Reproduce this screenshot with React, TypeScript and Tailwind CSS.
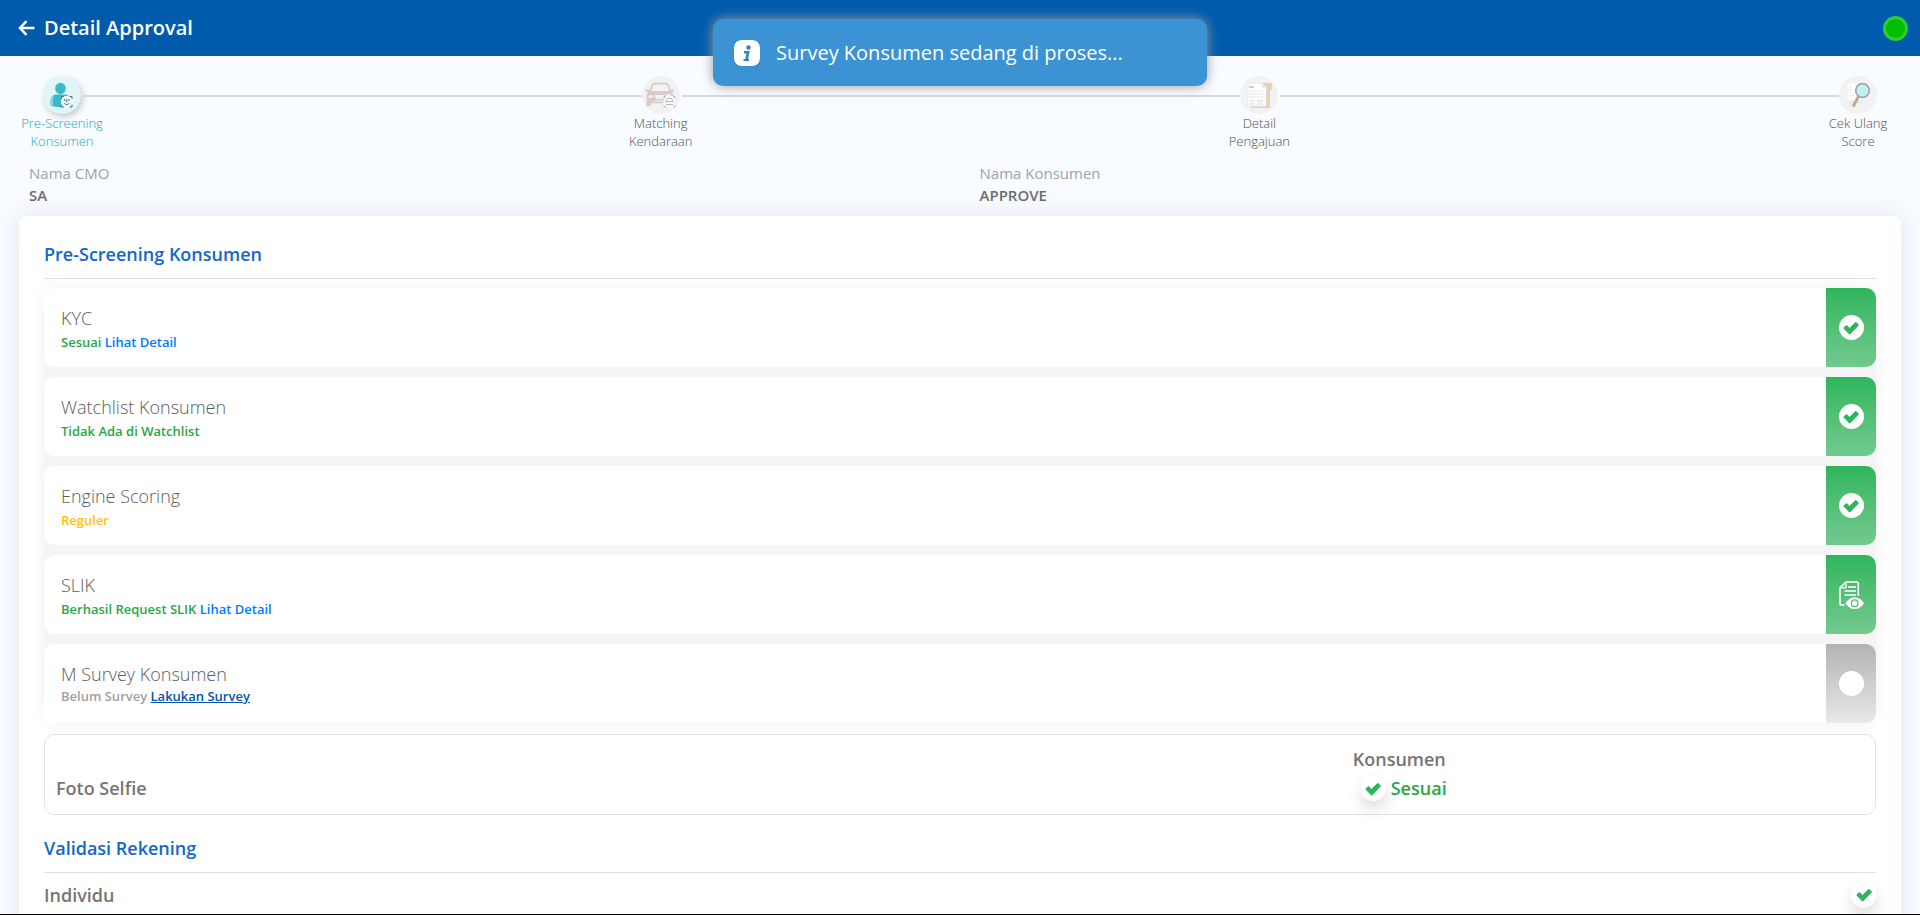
import React from "react";

function UserIcon() {
  return (
    <svg viewBox="0 0 38 38" className="size-full" aria-hidden="true">
      <ellipse cx="17.5" cy="12.5" rx="5.3" ry="5.7" fill="#3db8cb" />
      <path d="M7.5 29v-4c0-4.500 3-6.500 6.500-6.500h7c4 0 6.500 2 6.500 6.500v4c-5 3-15 3-20 0z" fill="#3db8cb" />
      <path d="M7.500 29v-4c0-3 1-4.800 3-5.800l-.8 11.200z" fill="#8fd5e0" />
      <rect x="18" y="20" width="11.500" height="11.500" rx="2.500" fill="#eef7fb" />
      <g fill="none" stroke="#4c6580" strokeWidth="1" strokeLinecap="round">
        <path d="M18.500 22.500v-2h2M27 20.500h2v2M29 29v2h-2M20.500 31h-2v-2" />
        <path d="M21.500 23.500v1M26 23.500v1M23.800 23.500v2.500M21.300 27.300c1.200 1.800 3.800 1.800 5 0" />
      </g>
    </svg>
  );
}

function CarIcon() {
  return (
    <svg viewBox="0 0 38 38" className="size-full" aria-hidden="true">
      <g fill="none" stroke="#d9cbcb" strokeWidth="1.800" strokeLinejoin="round">
        <path d="M8 15.500 10.500 9c.4-1 1-1.500 2-1.500h11.500c1 0 1.600.5 2 1.500l2.500 6.500" />
      </g>
      <path d="M3 13.500h4l1.500 1.500h20l1.500-1.500h2l-.5 2-1.500.5c1 1.300 1.500 2.500 1.500 4V30h-4v-2.800H9V30H4.500V20c0-1.500.5-2.700 1.500-4l-2.500-.8z" fill="#d9cbcb" />
      <ellipse cx="8.800" cy="20.500" rx="2.400" ry="1.600" fill="#f2f0f0" />
      <ellipse cx="26.500" cy="19.500" rx="2.400" ry="1.400" fill="#f2f0f0" />
      <path d="M13 19.500h9l-1.500 3h-6zM12 25h9" fill="#f2f0f0" stroke="#f2f0f0" strokeWidth="1" />
      <rect x="21.500" y="20" width="12" height="11.500" rx="2" fill="#fafafa" />
      <g fill="none" stroke="#b9b9b9" strokeWidth="1">
        <path d="M22 22.500V20.500h2M31 20.500h2v2M33 29v2h-2M24 31h-2v-2" />
        <path d="M24.500 24.500 25.500 22.500h4l1 2M23 25.500h9M24 28.500h7" />
      </g>
    </svg>
  );
}

function FolderIcon() {
  return (
    <svg viewBox="0 0 38 38" className="size-full" aria-hidden="true">
      <path d="M19 7h13v6.500h-2V32H11v-3h11z" fill="#e9cfb4" />
      <path d="M8 7.500h14.500l3.500 4V30H8z" fill="#fdfdfd" stroke="#e3eeee" strokeWidth=".7" />
      <path d="M22 7.500v4h4z" fill="#d7eeee" />
      <path d="M9 11h5" stroke="#b9bfca" strokeWidth="1.500" />
      <path d="M9 15h14M9 18h15M9 21h14" stroke="#e7e9ec" strokeWidth="1" />
      <path d="M10 25h5M17 25h6M10 28h5M17 28h6" stroke="#e2e5e8" strokeWidth="1.500" />
    </svg>
  );
}

function MagnifierIcon() {
  return (
    <svg viewBox="0 0 38 38" className="size-full" aria-hidden="true">
      <path d="M8 7h14v19H8z" fill="#fcfefe" stroke="#e2f2f2" strokeWidth=".8" />
      <path d="M8 25.500h16" stroke="#dceeee" strokeWidth="2" />
      <path d="M10.500 11h2M10.500 14h2M10.500 17h2M10.500 20h2" stroke="#dadfe2" strokeWidth="1" />
      <path d="m19.500 20.500-5.500 10" stroke="#c9a48a" strokeWidth="3" strokeLinecap="butt" />
      <circle cx="23.500" cy="14.500" r="6.800" fill="#c3f0f3" stroke="#a0a9ac" strokeWidth="1.700" />
    </svg>
  );
}

function CheckMark({ className }: { className: string }) {
  return (
    <svg viewBox="0 0 16 14" className={className} aria-hidden="true">
      <path
        d="M1.400 6.300 0.800 7.200 6.600 13.200 15.600 4.100 12.800 1.200 6.600 7.400 4.200 4.900Q3.500 4.300 2.700 5z"
        fill="#2eb55c"
        stroke="#2eb55c"
        strokeWidth="1"
        strokeLinejoin="round"
      />
    </svg>
  );
}

function CheckDisc() {
  return (
    <span className="flex size-[25px] items-center justify-center rounded-full bg-white shadow-[0_8px_16px_rgba(0,0,0,0.15)]">
      <CheckMark className="w-4" />
    </span>
  );
}

function DocumentEyeIcon() {
  return (
    <svg viewBox="0 0 25 28" className="h-7 w-[25px]" fill="none" stroke="#fff" aria-hidden="true">
      <path d="M5.500 24H2.800Q1 24 1 22.200V6.800L7 1h10.500Q19.300 1 19.300 2.800V15" strokeWidth="1.600" />
      <path d="M7 1v5.800H1" strokeWidth="1.300" />
      <path d="M9 6h8M5.500 10H17M5.500 14H17" strokeWidth="1.300" />
      <path d="M6.500 22.300C9.500 18 12 16.500 15.700 16.500S22 18 25 22.300C22 26.500 19.400 28 15.700 28S9.500 26.500 6.500 22.300z" fill="#fff" stroke="none" />
      <circle cx="15.700" cy="22.200" r="3.300" stroke="#4cbd73" strokeWidth="1.200" />
    </svg>
  );
}

type Step = { lines: [string, string]; icon: React.ReactNode; active?: boolean };

const steps: Step[] = [
  { lines: ["Pre-Screening", "Konsumen"], icon: <UserIcon />, active: true },
  { lines: ["Matching", "Kendaraan"], icon: <CarIcon /> },
  { lines: ["Detail", "Pengajuan"], icon: <FolderIcon /> },
  { lines: ["Cek Ulang", "Score"], icon: <MagnifierIcon /> },
];

function Stepper() {
  return (
    <div className="flex items-start px-[22px] pt-5">
      {steps.map((step, i) => (
        <React.Fragment key={step.lines[0]}>
          {i > 0 && <div className="mt-[19px] -mr-[21px] -ml-[19px] h-0.5 flex-1 bg-[#d6d8db]" />}
          <div className="flex w-20 flex-col items-center">
            <div
              className={
                step.active
                  ? "size-[38px] rounded-full bg-[#e0f5f6] shadow-[2px_3px_6px_rgba(0,0,0,0.2)]"
                  : "size-[38px] rounded-full bg-[#f2f2f2]"
              }
            >
              {step.icon}
            </div>
            <p
              className={
                step.active
                  ? "text-center text-[13px] leading-[18px] font-[350] whitespace-nowrap text-[#22a9be]"
                  : "text-center text-[13px] leading-[18px] font-[350] whitespace-nowrap text-[#505050]"
              }
            >
              {step.lines[0]}
              <br />
              {step.lines[1]}
            </p>
          </div>
        </React.Fragment>
      ))}
    </div>
  );
}

type Kind = "ok" | "document" | "pending";

function ResultRow({ title, kind, children }: { title: string; kind: Kind; children: React.ReactNode }) {
  return (
    <li className="flex min-h-[79px] overflow-hidden rounded-[10px] bg-white">
      <div className="flex-1 pt-[18px] pl-[17px]">
        <h3 className="text-lg leading-6 font-[350] text-[#5c5c5c]">{title}</h3>
        <p
          className={
            kind === "pending" ? "text-[13px] leading-5 font-semibold" : "text-[13px] leading-6 font-semibold"
          }
        >
          {children}
        </p>
      </div>
      <div
        className={
          kind === "pending"
            ? "flex w-[50px] items-center justify-center bg-linear-to-b from-[#b3b3b3] to-[#e9e9e9]"
            : "flex w-[50px] items-center justify-center bg-linear-to-b from-[#2db55b] to-[#72c98f]"
        }
      >
        {kind === "document" ? (
          <DocumentEyeIcon />
        ) : (
          <span className="flex size-[25px] items-center justify-center rounded-full bg-white">
            {kind === "ok" && <CheckMark className="w-4" />}
          </span>
        )}
      </div>
    </li>
  );
}

function SectionTitle({ children }: { children: React.ReactNode }) {
  return (
    <h2 className="border-b border-[#dfe0e2] pb-3 text-lg leading-6 font-[550] text-[#1467c8]">{children}</h2>
  );
}

export default function App() {
  return (
    <div className="h-screen overflow-hidden border-b border-black bg-[#f8fbff] font-['Open_Sans','Noto_Sans',sans-serif]">
      <header className="flex h-14 items-center bg-[#005bac] pr-3 pl-[18px] text-white">
        <button type="button" aria-label="Kembali" className="mr-[9px] flex w-[17px] items-center">
          <svg viewBox="0 0 17 16" className="h-4 w-[17px]" fill="none" stroke="#fff" strokeWidth="2.500" aria-hidden="true">
            <path d="M16.500 8H2.500M8.500 1.200 2 8l6.500 6.800" />
          </svg>
        </button>
        <h1 className="flex-1 text-xl font-semibold">Detail Approval</h1>
        <span className="size-[25px] rounded-full border-[3px] border-[#33cb33] bg-[#00be00]" />
      </header>

      <Stepper />

      <dl className="grid grid-cols-2 pt-3 pb-2.5 pl-[19px]">
        <div className="pl-2.5">
          <dt className="text-[15px] leading-[22px] text-[#a3a3a3]">Nama CMO</dt>
          <dd className="text-[15px] leading-[22px] font-semibold text-[#6c6c6c]">SA</dd>
        </div>
        <div className="pl-2.5">
          <dt className="text-[15px] leading-[22px] text-[#a3a3a3]">Nama Konsumen</dt>
          <dd className="text-[15px] leading-[22px] font-semibold text-[#6c6c6c]">APPROVE</dd>
        </div>
      </dl>

      <main className="mx-[19px] rounded-lg bg-white px-[25px] pt-[26px] pb-10 shadow-[0_0_24px_rgba(60,90,130,0.12)]">
        <SectionTitle>Pre-Screening Konsumen</SectionTitle>
        <ul className="mt-[9px] flex flex-col gap-2.5 rounded-[10px] bg-[#f5f5f5] shadow-[0_0_20px_rgba(0,0,0,0.06)]">
          <ResultRow title="KYC" kind="ok">
            <span className="text-[#28a745]">Sesuai</span>{" "}
            <a href="#kyc" className="text-[#007bff]">Lihat Detail</a>
          </ResultRow>
          <ResultRow title="Watchlist Konsumen" kind="ok">
            <span className="text-[#28a745]">Tidak Ada di Watchlist</span>
          </ResultRow>
          <ResultRow title="Engine Scoring" kind="ok">
            <span className="text-[#ffc107]">Reguler</span>
          </ResultRow>
          <ResultRow title="SLIK" kind="document">
            <span className="text-[#28a745]">Berhasil Request SLIK</span>{" "}
            <a href="#slik" className="text-[#007bff]">Lihat Detail</a>
          </ResultRow>
          <ResultRow title="M Survey Konsumen" kind="pending">
            <span className="text-[#a0a0a0]">Belum Survey</span>{" "}
            <a href="#survey" className="text-[#0056b3] underline">Lakukan Survey</a>
          </ResultRow>
        </ul>

        <section className="mt-[11px] grid grid-cols-[72%_1fr] items-end rounded-[10px] border border-[#dee2e6] pt-2.5 pr-[18px] pb-[11px] pl-[11px] text-lg font-[550] text-[#757575]">
          <h3 className="leading-[29px]">Foto Selfie</h3>
          <div>
            <p className="leading-[29px]">Konsumen</p>
            <p className="flex items-center gap-[5px] pl-2 leading-[29px] text-[#28a745]">
              <CheckDisc />
              Sesuai
            </p>
          </div>
        </section>

        <div className="mt-[21px]">
          <SectionTitle>Validasi Rekening</SectionTitle>
        </div>
        <div className="mt-2 flex items-center justify-between text-lg leading-7 font-[550] text-[#757575]">
          <span>Individu</span>
          <CheckDisc />
        </div>
      </main>

      <div
        role="status"
        className="absolute top-[19px] left-1/2 flex h-[67px] w-[494px] -translate-x-1/2 items-center rounded-[10px] bg-[#3c93d3] pl-[21px] shadow-[0_0_12px_#999]"
      >
        <svg viewBox="0 0 26 26" className="size-[26px]" aria-hidden="true">
          <rect width="26" height="26" rx="7" fill="#fff" />
          <circle cx="14.500" cy="7.500" r="2.200" fill="#3085c4" />
          <path d="M10 12.200h4.200l-1.800 7.300h2" fill="none" stroke="#3085c4" strokeWidth="2.600" />
          <path d="M9.500 20h5.500" stroke="#3085c4" strokeWidth="1.800" />
          <rect x="-.5" y="-.5" width="27" height="27" rx="7.500" fill="none" stroke="#2387d6" strokeWidth="1" />
        </svg>
        <span className="ml-4 text-xl text-white">Survey Konsumen sedang di proses...</span>
      </div>
    </div>
  );
}
